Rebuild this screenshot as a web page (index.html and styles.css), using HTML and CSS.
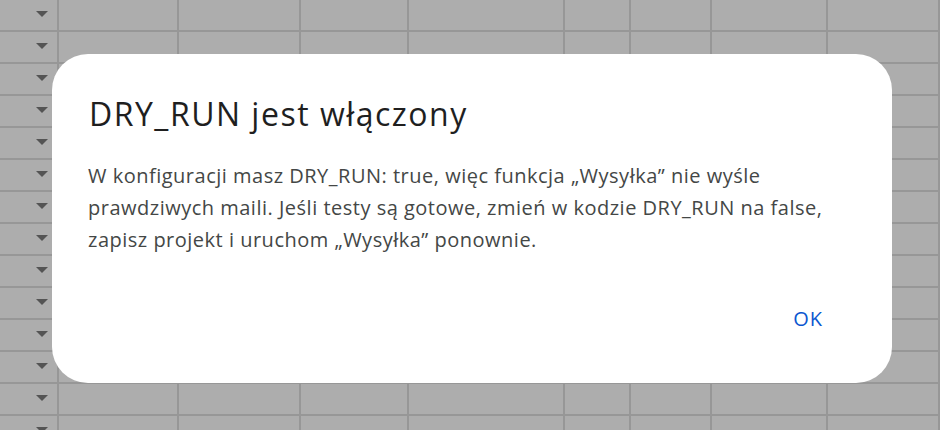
FILE: index.html
```html
<!DOCTYPE html>
<html lang="pl">
<head>
    <meta charset="UTF-8">
    <meta name="viewport" content="width=device-width, initial-scale=1.0">
    <title>DRY_RUN</title>
    <link rel="stylesheet" href="styles.css">
</head>
<body>
    <div class="sheet" id="sheet"></div>

    <div class="dialog" role="dialog" aria-labelledby="dlg-title">
        <h1 class="dialog-title" id="dlg-title">DRY_RUN jest włączony</h1>
        <p class="dialog-text">W konfiguracji masz DRY_RUN: true, więc funkcja „Wysyłka” nie wyśle prawdziwych maili. Jeśli testy są gotowe, zmień w kodzie DRY_RUN na false, zapisz projekt i uruchom „Wysyłka” ponownie.</p>
        <div class="dialog-actions">
            <button class="btn-ok">OK</button>
        </div>
    </div>

    <script>
        // siatka arkusza w tle
        const sheet = document.getElementById('sheet');
        const cols = 9;
        const rows = 14;
        for (let r = 0; r < rows; r++) {
            for (let c = 0; c < cols; c++) {
                const cell = document.createElement('div');
                cell.className = 'cell';
                if (c === 0) {
                    const arrow = document.createElement('span');
                    arrow.className = 'arrow';
                    cell.appendChild(arrow);
                }
                sheet.appendChild(cell);
            }
        }
    </script>
</body>
</html>
```

FILE: styles.css
```css
:root {
    --sheet-bg: #adadad;
    --grid-line: #979797;
    --title: #1f1f1f;
    --text: #444746;
    --blue: #0b57d0;
}

* {
    box-sizing: border-box;
    margin: 0;
    padding: 0;
}

body {
    background: var(--sheet-bg);
    width: 940px;
    height: 430px;
    overflow: hidden;
    font-family: 'Open Sans', Roboto, 'Liberation Sans', Arial, sans-serif;
}

.sheet {
    display: grid;
    grid-template-columns: 59px 120px 122px 108px 156px 66px 81px 116px 1fr;
    grid-auto-rows: 32px;
}

.cell {
    border-right: 2px solid var(--grid-line);
    border-bottom: 2px solid var(--grid-line);
    display: flex;
    justify-content: flex-end;
    padding: 11px 9px 0 0;
}

.arrow {
    width: 0;
    height: 0;
    border-left: 6px solid transparent;
    border-right: 6px solid transparent;
    border-top: 6px solid #545454;
}

.dialog {
    position: absolute;
    left: 52px;
    top: 54px;
    width: 840px;
    height: 329px;
    background: #fff;
    border-radius: 36px;
    padding: 36px 36px 0 36px;
    display: flex;
    flex-direction: column;
}

.dialog-title {
    font-size: 32px;
    font-weight: 400;
    letter-spacing: 1.5px;
    color: var(--title);
    line-height: 48px;
    margin-left: 1px;
}

.dialog-text {
    margin-top: 22px;
    font-size: 20px;
    letter-spacing: 0.5px;
    line-height: 32px;
    color: var(--text);
    max-width: 745px;
}

.dialog-actions {
    display: flex;
    justify-content: flex-end;
    margin-top: 41px;
}

.btn-ok {
    background: none;
    border: none;
    font-family: inherit;
    font-size: 20px;
    font-weight: 500;
    letter-spacing: 1px;
    color: var(--blue);
    padding: 8px 33px 8px 12px;
    cursor: pointer;
}
```
